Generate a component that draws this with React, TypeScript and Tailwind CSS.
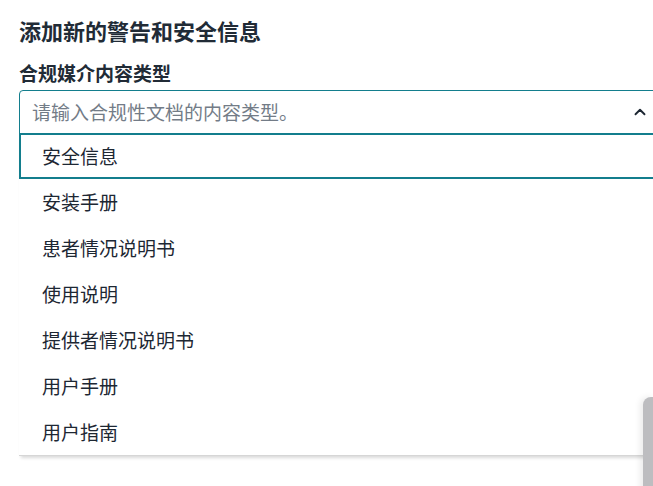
import { ChevronUp } from "lucide-react";

const options = [
  "安全信息",
  "安装手册",
  "患者情况说明书",
  "使用说明",
  "提供者情况说明书",
  "用户手册",
  "用户指南",
];

export default function App() {
  return (
    <div className="relative h-[486px] w-[653px] overflow-hidden bg-white font-['Noto_Sans_CJK_SC',sans-serif] text-[#1d2733]">
      <div className="w-[665px] shrink-0 pl-[19px] pt-[16px]">
        <h1 className="text-[22px] font-bold leading-[29px] text-[#212b36]">添加新的警告和安全信息</h1>
        <label className="mt-[15px] block text-[19px] font-bold leading-[25px] text-[#212b36]">
          合规媒介内容类型
        </label>

        <div className="mt-[5px] flex h-[44px] items-center justify-between rounded-t-[4px] border border-[#137e8d] pl-[12px] pr-[15px]">
          <span className="text-[19px] text-[#737c87]">请输入合规性文档的内容类型。</span>
          <ChevronUp className="h-[18px] w-[18px] text-[#1d2733]" strokeWidth={2.5} />
        </div>

        <ul className="-mt-px border-b border-[#d6d6d6] shadow-[0_4px_3px_-2px_rgba(0,0,0,0.15)]">
          {options.map((o, i) => (
            <li
              key={o}
              className={
                i === 0
                  ? "flex h-[46px] items-center border-2 border-[#137e8d] pl-[21px] text-[19px]"
                  : "flex h-[46px] items-center pl-[23px] text-[19px]"
              }
            >
              {o}
            </li>
          ))}
        </ul>
      </div>

      {/* scrollbar of the panel behind */}
      <div className="absolute left-[643px] top-[397px] h-[100px] w-[12px] rounded-tl-[8px] bg-[#bdbdc0] shadow-[-3px_0_6px_rgba(0,0,0,0.08)]" />
    </div>
  );
}
